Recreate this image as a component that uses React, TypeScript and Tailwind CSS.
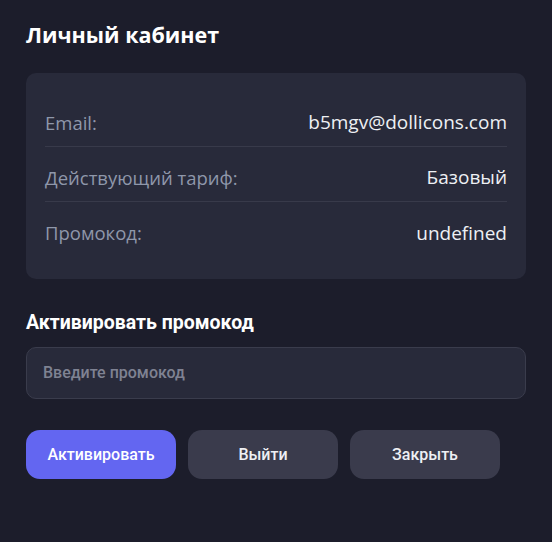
import React from "react";

export default function App() {
  const rows = [
    ["Email:", "b5mgv@dollicons.com"],
    ["Действующий тариф:", "Базовый"],
    ["Промокод:", "undefined"],
  ];
  return (
    <div className="w-[552px] h-[542px] bg-[#1c1d2b] px-[26px] pt-[21px]" style={{ fontFamily: '"Open Sans", "Noto Sans", sans-serif' }}>
      <h1 className="text-[21.5px] font-bold text-white leading-[28px]">Личный кабинет</h1>
      <div className="mt-[24px] w-[500px] rounded-[10px] bg-[#282a3a] px-[19px] pt-[19px] pb-[22px]">
        {rows.map(([l, v], i) => (
          <div key={l} className={`flex items-center justify-between h-[55px] pt-[7px] ${i < rows.length - 1 ? "border-b border-[#383a4a]" : ""}`}>
            <span className="text-[18.5px] text-[#8f97aa]">{l}</span>
            <span className="text-[19px] text-[#eef0f4]">{v}</span>
          </div>
        ))}
      </div>
      <div className="mt-[31px] text-[19.5px] font-bold text-white leading-[26px]" style={{ fontFamily: 'Roboto, "Liberation Sans", sans-serif' }}>
        Активировать промокод
      </div>
      <div className="mt-[11px] w-[500px] h-[52px] rounded-[10px] border border-[#3a3c4c] bg-[#282a3a] flex items-center px-[16px]">
        <span className="text-[16px] font-medium text-[#7f8292]" style={{ fontFamily: 'Roboto, "Liberation Sans", sans-serif' }}>Введите промокод</span>
      </div>
      <div className="mt-[31px] flex gap-[12px]" style={{ fontFamily: 'Roboto, "Liberation Sans", sans-serif' }}>
        <button className="w-[150px] h-[49px] rounded-[14px] bg-[#6366f1] text-white text-[16px] font-medium">Активировать</button>
        <button className="w-[150px] h-[49px] rounded-[14px] bg-[#3a3b4c] text-[#eef0f4] text-[16px] font-medium">Выйти</button>
        <button className="w-[150px] h-[49px] rounded-[14px] bg-[#3a3b4c] text-[#eef0f4] text-[16px] font-medium">Закрыть</button>
      </div>
    </div>
  );
}
